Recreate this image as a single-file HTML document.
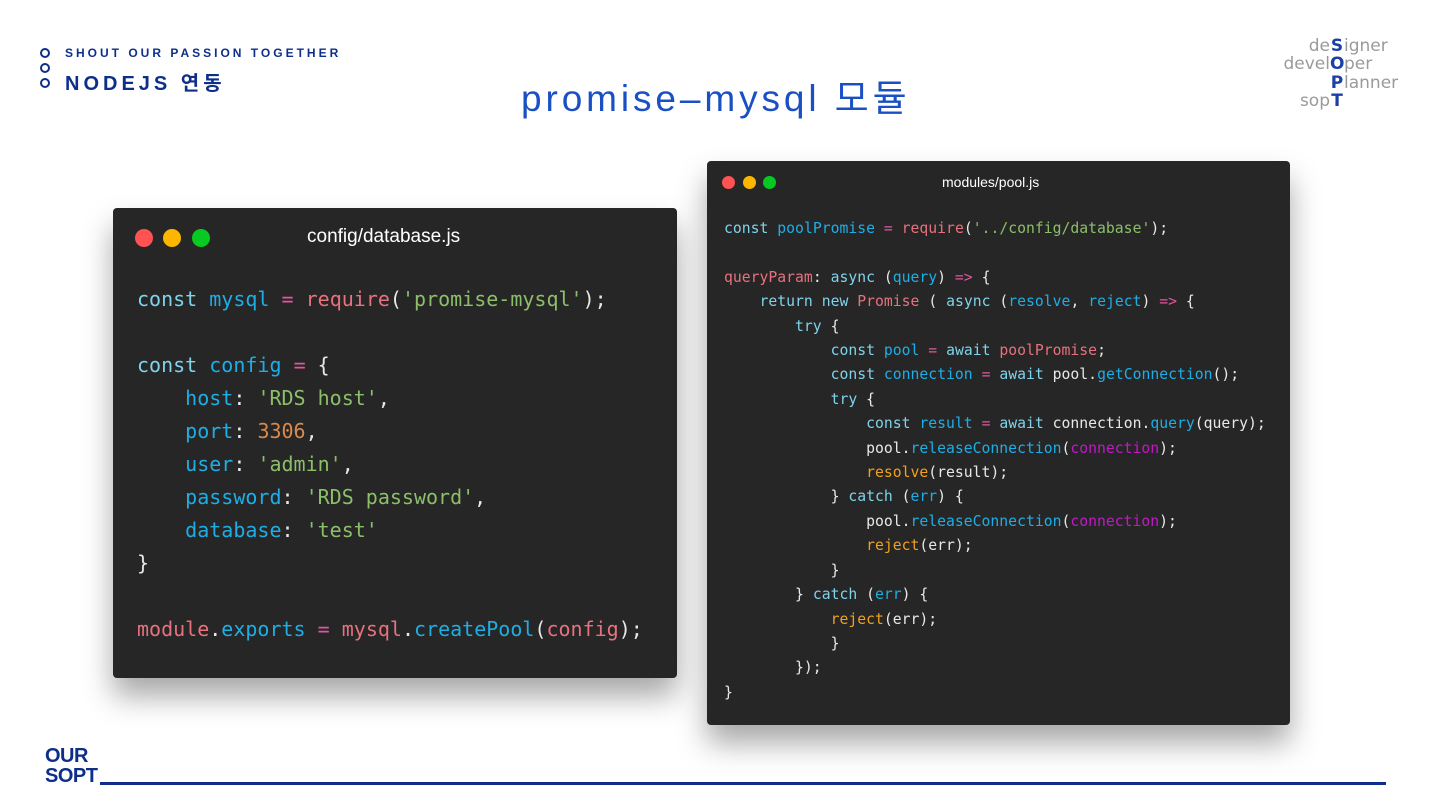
<!DOCTYPE html>
<html><head><meta charset="utf-8"><style>
body{margin:0;width:1440px;height:810px;background:#fff;position:relative;overflow:hidden;font-family:"Liberation Sans","Noto Sans CJK KR",sans-serif}
.abs{position:absolute}
.win{position:absolute;background:#262626;border-radius:4px;box-shadow:0 18px 30px rgba(0,0,0,.35)}
.dot{position:absolute;border-radius:50%}
pre{margin:0;position:absolute;font-family:"DejaVu Sans Mono",monospace;color:#e8e8e8}
.k{color:#7fd3ea}.v{color:#1eaee6}.f{color:#e8717e}.s{color:#8cbf6a}.n{color:#d88a4e}.o{color:#e0569f}.m{color:#c417c8}.y{color:#f0a11e}
.sg{position:absolute;font-size:17px;color:#9a9a9a;font-family:"DejaVu Sans",sans-serif;line-height:18.5px;white-space:nowrap}
.l{right:110px;text-align:right}
.b{left:1330px;color:#1a3fa5;font-weight:bold;width:14px;text-align:center}
.r{left:1344px}
</style></head><body>
<div class="abs" style="left:40px;top:48px">
 <div style="width:6px;height:6px;border:2.5px solid #0d2f8a;border-radius:50%;margin-bottom:5px"></div>
 <div style="width:6px;height:6px;border:2.5px solid #0d2f8a;border-radius:50%;margin-bottom:5px"></div>
 <div style="width:6px;height:6px;border:2.5px solid #0d2f8a;border-radius:50%"></div>
</div>
<div class="abs" style="left:65px;top:46px;font-size:12px;font-weight:bold;letter-spacing:3px;color:#0d2f8a">SHOUT OUR PASSION TOGETHER</div>
<div class="abs" style="left:65px;top:67px;font-size:20px;letter-spacing:4px;color:#0d2f8a;font-weight:bold">NODEJS 연동</div>
<div class="abs" style="left:521px;top:78px;font-size:37px;letter-spacing:3.9px;color:#1b50c4;white-space:nowrap;line-height:42px">promise–mysql 모듈</div>
<div class="sg l" style="top:37px">de</div><div class="sg b" style="top:37px">S</div><div class="sg r" style="top:37px">igner</div>
<div class="sg l" style="top:55px">devel</div><div class="sg b" style="top:55px">O</div><div class="sg r" style="top:55px">per</div>
<div class="sg b" style="top:74px">P</div><div class="sg r" style="top:74px">lanner</div>
<div class="sg l" style="top:92px">sop</div><div class="sg b" style="top:92px">T</div>

<div class="win" style="left:113px;top:208px;width:564px;height:470px">
 <div class="dot" style="left:22px;top:21px;width:18px;height:18px;background:#fe5352"></div>
 <div class="dot" style="left:50px;top:21px;width:18px;height:18px;background:#fdb600"></div>
 <div class="dot" style="left:79px;top:21px;width:18px;height:18px;background:#06c921"></div>
 <div class="abs" style="left:194px;top:18px;color:#fff;font-size:19px">config/database.js</div>
</div>
<pre style="left:137px;top:283px;font-size:20px;line-height:33px"><span class="k">const</span> <span class="v">mysql</span> <span class="o">=</span> <span class="f">require</span>(<span class="s">'promise-mysql'</span>);

<span class="k">const</span> <span class="v">config</span> <span class="o">=</span> {
    <span class="v">host</span>: <span class="s">'RDS host'</span>,
    <span class="v">port</span>: <span class="n">3306</span>,
    <span class="v">user</span>: <span class="s">'admin'</span>,
    <span class="v">password</span>: <span class="s">'RDS password'</span>,
    <span class="v">database</span>: <span class="s">'test'</span>
}

<span class="f">module</span>.<span class="v">exports</span> <span class="o">=</span> <span class="f">mysql</span>.<span class="v">createPool</span>(<span class="f">config</span>);</pre>

<div class="win" style="left:707px;top:161px;width:583px;height:564px">
 <div class="dot" style="left:15px;top:15px;width:13px;height:13px;background:#fe5352"></div>
 <div class="dot" style="left:36px;top:15px;width:13px;height:13px;background:#fdb600"></div>
 <div class="dot" style="left:56px;top:15px;width:13px;height:13px;background:#06c921"></div>
 <div class="abs" style="left:235px;top:13px;color:#fff;font-size:14px">modules/pool.js</div>
</div>
<pre style="left:724px;top:217px;font-size:14.75px;line-height:24.4px"><span class="k">const</span> <span class="v">poolPromise</span> <span class="o">=</span> <span class="f">require</span>(<span class="s">'../config/database'</span>);

<span class="f">queryParam</span>: <span class="k">async</span> (<span class="v">query</span>) <span class="o">=&gt;</span> {
    <span class="k">return</span> <span class="k">new</span> <span class="f">Promise</span> ( <span class="k">async</span> (<span class="v">resolve</span>, <span class="v">reject</span>) <span class="o">=&gt;</span> {
        <span class="k">try</span> {
            <span class="k">const</span> <span class="v">pool</span> <span class="o">=</span> <span class="k">await</span> <span class="f">poolPromise</span>;
            <span class="k">const</span> <span class="v">connection</span> <span class="o">=</span> <span class="k">await</span> pool.<span class="v">getConnection</span>();
            <span class="k">try</span> {
                <span class="k">const</span> <span class="v">result</span> <span class="o">=</span> <span class="k">await</span> connection.<span class="v">query</span>(query);
                pool.<span class="v">releaseConnection</span>(<span class="m">connection</span>);
                <span class="y">resolve</span>(result);
            } <span class="k">catch</span> (<span class="v">err</span>) {
                pool.<span class="v">releaseConnection</span>(<span class="m">connection</span>);
                <span class="y">reject</span>(err);
            }
        } <span class="k">catch</span> (<span class="v">err</span>) {
            <span class="y">reject</span>(err);
            }
        });
}</pre>

<div class="abs" style="left:45px;top:746px;font-size:20px;font-weight:bold;line-height:20px;color:#0d2f8a;letter-spacing:-0.5px">OUR<br>SOPT</div>
<div class="abs" style="left:100px;top:782px;width:1286px;height:3px;background:#0d2f8a"></div>
</body></html>
